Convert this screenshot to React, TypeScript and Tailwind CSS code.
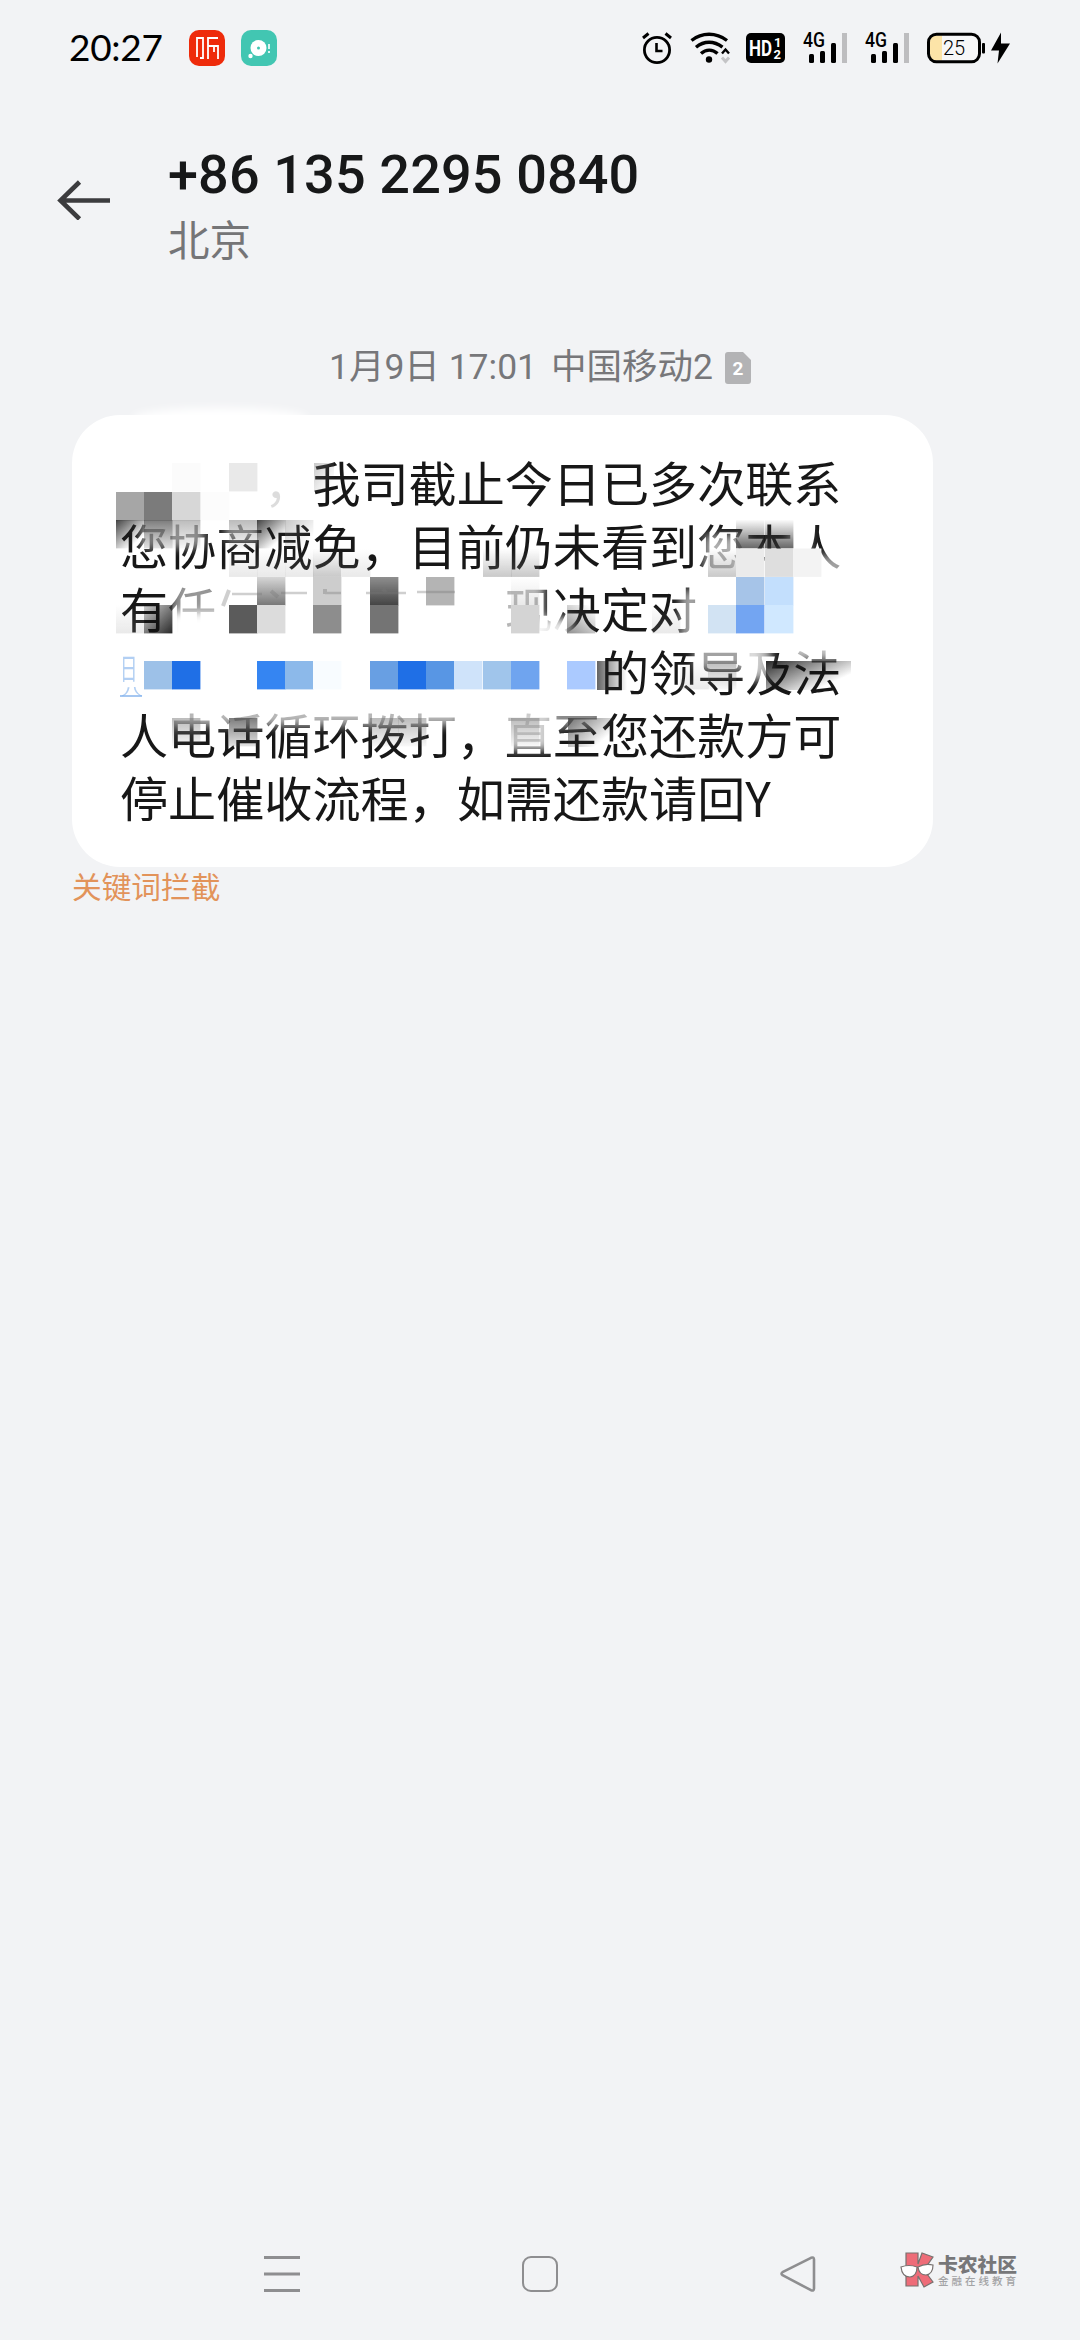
const SANS = "font-[Roboto,'Noto_Sans_CJK_SC',sans-serif]";

const AlarmIcon = () => (
    <svg className="block" width="30" height="32" viewBox="0 0 30 32" fill="none" stroke="#000">
        <circle cx="15" cy="18" r="12.6" strokeWidth="2.8" />
        <path d="M14.5 11v8h6" strokeWidth="2.6" />
        <path d="M1 6l5.5-4.5M29 6l-5.5-4.5" strokeWidth="3" />
    </svg>
);

const WifiIcon = () => (
    <svg className="block" width="41" height="32" viewBox="0 0 41 32" fill="none" stroke="#000">
        <path d="M1.5 8.5C12 .2 26 .2 37 8.5" strokeWidth="3.4" />
        <path d="M6 15.2c8-6.6 18-6.6 26.5 0" strokeWidth="3.4" />
        <path d="M11 21.5c5-4.5 11.500-4.5 16.5 0" strokeWidth="3.4" />
        <circle cx="19" cy="27.5" r="3.2" fill="#000" stroke="none" />
        <path d="M32 21.5l3.5-4 3.5 4" strokeWidth="2.4" />
        <path d="M32 25.5l3.5 4 3.5-4" stroke="#c4c4c6" strokeWidth="3" />
    </svg>
);

const HdIcon = () => (
    <svg className="block" width="39" height="30" viewBox="0 0 39 30">
        <rect width="39" height="30" rx="5" fill="#000" />
        <g fill="#fff" fontFamily="Roboto, sans-serif" fontWeight="700">
            <text x="3" y="23" fontSize="22" textLength="23" lengthAdjust="spacingAndGlyphs">HD</text>
            <text x="28" y="14" fontSize="13">1</text>
            <text x="27.5" y="26" fontSize="13">2</text>
        </g>
    </svg>
);

const SignalIcon = () => (
    <svg className="block overflow-visible" width="45" height="32" viewBox="0 0 45 32">
        <text x="0" y="15" fontFamily="Roboto, sans-serif" fontWeight="500" fontSize="19.5" textLength="22" lengthAdjust="spacingAndGlyphs">4G</text>
        <rect x="6" y="22" width="5" height="9" rx="1.5" />
        <rect x="17" y="19" width="5" height="12" rx="1.5" />
        <rect x="28" y="11" width="5" height="20" rx="1.5" />
        <rect x="39" y="1" width="5" height="30" fill="#bdbdbf" />
    </svg>
);

const BatteryIcon = () => (
    <svg className="block" width="83" height="32" viewBox="0 0 83 32">
        <rect x="1.5" y="2" width="51" height="28" rx="8" fill="#f7f7f8" />
        <path d="M8 3.5h7v25H8q-5 0-5-6v-13q0-6 5-6z" fill="#fce4a8" />
        <rect x="1.5" y="2.2" width="51" height="27.6" rx="8" fill="none" stroke="#000" strokeWidth="3" />
        <text x="16" y="22.5" fontFamily="Roboto, sans-serif" fontWeight="300" fontSize="20">25</text>
        <rect x="55" y="11" width="3" height="10.5" rx="1" />
        <path d="M74 .5L64 18.5h8L70.5 31.5 83 11.5h-9z" />
    </svg>
);

const StatusBar = () => (
    <div className="flex h-[96px] items-center pl-[69px]">
        <div className="w-[120px] pb-[3px] font-[Lato,sans-serif] text-[37px] leading-none tracking-[-0.3px] text-black">20:27</div>
        <svg className="block" width="36" height="36" viewBox="0 0 36 36">
            <rect width="36" height="36" rx="10" fill="#ee2b0b" />
            <g fill="none" stroke="#fff" strokeWidth="1.8">
                <path d="M8 27V8h6v20h-3" />
                <path d="M19 29V8h10M19 16h10v13M25 16v6" />
            </g>
        </svg>
        <svg className="ml-4 block" width="36" height="36" viewBox="0 0 36 36">
            <rect width="36" height="36" rx="10" fill="#42c6b2" />
            <circle cx="17.5" cy="18" r="8" fill="#fff" />
            <circle cx="17.5" cy="18" r="1.5" fill="#42c6b2" />
            <circle cx="9.5" cy="26" r="2.2" fill="#fff" />
            <path d="M28 14v5M28 21v2" stroke="#fff" strokeWidth="1.6" />
        </svg>
        <div className="ml-[365px] flex items-center">
            <AlarmIcon />
            <div className="ml-[18px]"><WifiIcon /></div>
            <div className="ml-[15px]"><HdIcon /></div>
            <div className="ml-[18px]"><SignalIcon /></div>
            <div className="ml-[17px]"><SignalIcon /></div>
            <div className="ml-[17px]"><BatteryIcon /></div>
        </div>
    </div>
);

const Header = () => (
    <div className="flex h-[222px] pt-[46px] pl-[57px]">
        <svg className="mt-[38px] block" width="54" height="40" viewBox="0 0 54 40" fill="none" stroke="#3c3c3e" strokeWidth="4.6">
            <path d="M53 20.5H4M22.5 2L3.5 20.5 22.5 39" />
        </svg>
        <div className="ml-[57px] pt-px">
            <h1 className="text-[54px] leading-[64px] font-medium tracking-[0.13px] text-[#171819]">+86 135 2295 0840</h1>
            <p className="mt-[4px] text-[41.5px] leading-[62px] text-[#757577]">北京</p>
        </div>
    </div>
);

// [column, row, color]; columns and rows are mosaic cells
const rowY = [463, 492, 520, 548.5, 577, 605, 661, 718];
const cells: [number, number, string][] = [
    [2, 0, "#fbfbfb"], [4, 0, "#e9e9e9"],
    [0, 1, "#a6a6a6"], [1, 1, "#7b7b7b"], [2, 1, "#d7d7d7"], [3, 1, "#fcfcfc"],
    [0, 2, "url(#darkTL)"], [1, 2, "url(#midDown)"], [2, 2, "url(#softDown)"], [4, 2, "url(#softDown)"], [5, 2, "url(#darkTL)"], [6, 2, "url(#paleTL)"],
    [22, 2, "url(#darkUp)"], [23, 2, "url(#darkUp)"],
    [4, 3, "url(#paleUp)"], [5, 3, "url(#paleUp)"], [6, 3, "url(#paleUp)"], [7, 3, "url(#softUp)"], [8, 3, "url(#paleUp)"],
    [13, 3, "url(#softUp)"], [14, 3, "url(#softUp)"],
    [21, 3, "url(#softUp)"], [22, 3, "#ebebeb"], [23, 3, "#dedede"], [24, 3, "#f3f3f3"],
    [5, 4, "url(#grayCell)"], [7, 4, "#cdcdcd"], [9, 4, "url(#blackCell)"], [11, 4, "#b4b4b4"], [14, 4, "url(#paleUp)"],
    [22, 4, "#a6c4e8"], [23, 4, "#c3dffd"],
    [0, 5, "url(#paleUp)"], [1, 5, "url(#darkBR)"], [4, 5, "#5b5b5b"], [5, 5, "#dcdcdc"], [7, 5, "#8d8d8d"], [9, 5, "#747474"], [14, 5, "#d4d4d4"],
    [16, 5, "url(#softBL)"], [19, 5, "url(#paleUp)"],
    [21, 5, "#d2e3f3"], [22, 5, "#73a5f2"], [23, 5, "#d0e8ff"],
    [1, 6, "#9dc1e8"], [2, 6, "#1f6fe6"], [5, 6, "#3585f2"], [6, 6, "#8cb9ea"], [7, 6, "#f8fcff"],
    [9, 6, "#689fe3"], [10, 6, "#1f6fe6"], [11, 6, "#5896e4"], [12, 6, "#cfe3fa"], [13, 6, "#a0c5eb"], [14, 6, "#6fa4ef"], [16, 6, "#abcaff"],
    [20, 6, "url(#paleUp)"], [21, 6, "url(#softDown)"],
    [2, 7, "url(#softDown)"], [4, 7, "url(#midDown)"], [9, 7, "url(#softDown)"], [10, 7, "url(#softDown)"], [14, 7, "url(#softDown)"],
];

// [id, x1, y1, x2, y2, color, opacity from, opacity to]
const fades: [string, number, number, number, number, string, number, number][] = [
    ["darkTL", 0, 0, 0.7, 0.8, "#222", 0.85, 0],
    ["paleTL", 0, 0, 0.8, 0.8, "#777", 0.4, 0],
    ["midDown", 0, 0, 0, 1, "#444", 0.7, 0.15],
    ["softDown", 0, 0, 0, 1, "#777", 0.5, 0.05],
    ["darkUp", 0, 1, 0, 0, "#333", 0.75, 0.02],
    ["softUp", 0, 1, 0, 0, "#777", 0.4, 0],
    ["paleUp", 0, 1, 0, 0, "#999", 0.22, 0],
    ["grayCell", 0, 1, 0, 0, "#777", 1, 0.3],
    ["blackCell", 0, 1, 0, 0, "#444", 1, 0.6],
    ["darkBR", 1, 1, 0, 0, "#111", 0.9, 0.2],
    ["softBL", 0, 1, 0.8, 0, "#444", 0.6, 0],
    ["darkWide", 0, 0, 0.85, 0.65, "#111", 0.9, 0],
    ["midWide", 0, 0, 0.85, 0.65, "#333", 0.7, 0],
    ["darkLeft", 0, 0, 1, 0, "#222", 0.7, 0],
];

const Mosaic = () => (
    <svg className="absolute -top-[15px] left-0 block" width="861" height="467" viewBox="72 400 861 467">
        <defs>
            <filter id="smudge" x="-30%" y="-60%" width="160%" height="220%">
                <feGaussianBlur stdDeviation="5" />
            </filter>
            {fades.map(([id, x1, y1, x2, y2, color, from, to]) => (
                <linearGradient key={id} id={id} x1={x1} y1={y1} x2={x2} y2={y2}>
                    <stop offset="0" stopColor={color} stopOpacity={from} />
                    <stop offset="1" stopColor={color} stopOpacity={to} />
                </linearGradient>
            ))}
        </defs>
        <g filter="url(#smudge)" fill="#fff">
            <ellipse cx="220" cy="419" rx="88" ry="11" />
            <rect x="258" y="480" width="34" height="38" opacity="0.85" />
            <rect x="140" y="518" width="64" height="30" opacity="0.55" />
            <rect x="225" y="518" width="34" height="24" opacity="0.5" />
            <rect x="704" y="535" width="44" height="44" opacity="0.65" />
            <rect x="738" y="560" width="54" height="24" />
            <rect x="788" y="520" width="22" height="60" opacity="0.55" />
            <rect x="810" y="555" width="36" height="30" opacity="0.6" />
            <rect x="172" y="580" width="50" height="36" opacity="0.55" />
            <rect x="168" y="612" width="104" height="32" />
            <rect x="222" y="575" width="60" height="65" />
            <rect x="500" y="580" width="44" height="60" opacity="0.7" />
            <rect x="524" y="618" width="48" height="28" opacity="0.9" />
            <rect x="680" y="590" width="22" height="56" opacity="0.6" />
            <rect x="694" y="640" width="64" height="30" opacity="0.6" />
            <rect x="745" y="640" width="26" height="40" opacity="0.7" />
            <rect x="790" y="640" width="52" height="20" opacity="0.75" />
            <rect x="170" y="706" width="290" height="20" opacity="0.7" />
            <rect x="504" y="706" width="48" height="44" opacity="0.8" />
            <rect x="552" y="706" width="50" height="22" opacity="0.5" />
        </g>
        {cells.map(([col, row, color]) => (
            <rect key={`${col}-${row}`} x={116 + Math.round(col * 28.2)} y={rowY[row]} width="28.4" height="28.4" fill={color} />
        ))}
        <rect x="314" y="463" width="20" height="29" fill="url(#paleTL)" />
        <rect x="597" y="661" width="30" height="29" fill="url(#darkLeft)" />
        <rect x="766" y="661" width="85" height="29" fill="url(#darkWide)" />
        <rect x="568" y="718" width="46" height="29" fill="url(#midWide)" />
        <g fill="none" stroke="#777" strokeWidth="2.5" opacity="0.35">
            <path d="M232 594h30M281 593h26M325 593h16M366 593h40M417 592h38" />
            <path d="M229 590l-6 16M271 591l7 6M325 589v5M383 589l3 4" strokeWidth="4" />
        </g>
        <g fill="#7fb0ec" fontFamily="'Noto Sans CJK SC', sans-serif" opacity="0.6">
            <text transform="translate(120 680) scale(.6 1)" fontSize="29">日</text>
            <text transform="translate(121 696) scale(1 .5)" fontSize="22">八</text>
        </g>
        <path d="M120 696h22" stroke="#7fb0ec" strokeWidth="2" opacity="0.7" />
    </svg>
);

const lines = [
    "　　　，我司截止今日已多次联系",
    "您协商减免，目前仍未看到您本人",
    "有任　　　　　　现决定对",
    "　　　　　　　　　　的领导及法",
    "人电话循环拨打，直至您还款方可",
    "停止催收流程，如需还款请回Y",
];

const Message = () => (
    <div className="px-[72px]">
        <div className="flex h-[97px] items-center justify-center pt-[3px] text-[35.5px] text-[#77777a]">
            <span>1月9日 17:01</span>
            <span className="ml-[14px]">中国移动2</span>
            <svg className="ml-3 block" width="26" height="32" viewBox="0 0 26 32">
                <path d="M3 0h15l8 8v21q0 3-3 3H3q-3 0-3-3V3q0-3 3-3z" fill="#b3b3b5" />
                <text x="13" y="23" textAnchor="middle" fill="#fff" fontFamily="Roboto, sans-serif" fontWeight="700" fontSize="19">2</text>
            </svg>
        </div>
        <div className="relative h-[452px] w-[861px] rounded-[48px] bg-white pt-[35px] pl-[48px]">
            {lines.map((line) => (
                <p key={line} className="h-[63px] font-['Noto_Sans_CJK_SC',sans-serif] text-[48.1px] leading-[63px] whitespace-pre text-[#171717]">{line}</p>
            ))}
            <Mosaic />
        </div>
        <p className="text-[29.7px] leading-[42px] text-[#e2935a]">关键词拦截</p>
    </div>
);

const NavBar = () => (
    <div className="mt-auto flex h-[132px] items-center pl-[264px]">
        <svg className="block" width="36" height="36" viewBox="0 0 36 36" stroke="#8e8e90" strokeWidth="3">
            <path d="M0 1.5h36M0 18h36M0 34.5h36" />
        </svg>
        <div className="ml-[222px] h-9 w-9 rounded-[9px] border-[2.5px] border-[#8e8e90]"></div>
        <svg className="ml-[222px] block" width="36" height="36" viewBox="0 0 36 36" fill="none" stroke="#8e8e90" strokeWidth="2.6" strokeLinejoin="round">
            <path d="M31 1.8L2.5 16.2q-2 1.5 0 3L31 34.2q3 1 3-1.7v-29q0-2.7-3-1.7z" />
        </svg>
        <div className="ml-[84px] flex items-center pb-[8px]">
            <svg className="block" width="34" height="36" viewBox="0 0 34 36" stroke="#77716f" strokeWidth="1.2">
                <path d="M6 1h12v11L22 1l11 4-9 13 9 12-9 5-6-11v10H6z" fill="#ee6c78" />
                <path d="M1 15q8-3 16 0 0 9-7 10Q2 25 1 15zM18 15q7-4 15-2 0 9-7 10-7 0-8-8z" fill="#fff" />
            </svg>
            <div className="ml-1 font-['Noto_Sans_CJK_SC',sans-serif] whitespace-nowrap">
                <div className="text-[19.8px] leading-[20px] font-black text-[#777779]">卡农社区</div>
                <div className="text-[10.5px] leading-[13px] font-medium tracking-[3px] text-[#a3a3a5]">金融在线教育</div>
            </div>
        </div>
    </div>
);

export default function App() {
    return (
        <div className={`flex h-[2340px] w-[1080px] flex-col overflow-hidden bg-[#f2f3f5] ${SANS}`}>
            <StatusBar />
            <Header />
            <Message />
            <NavBar />
        </div>
    );
}
